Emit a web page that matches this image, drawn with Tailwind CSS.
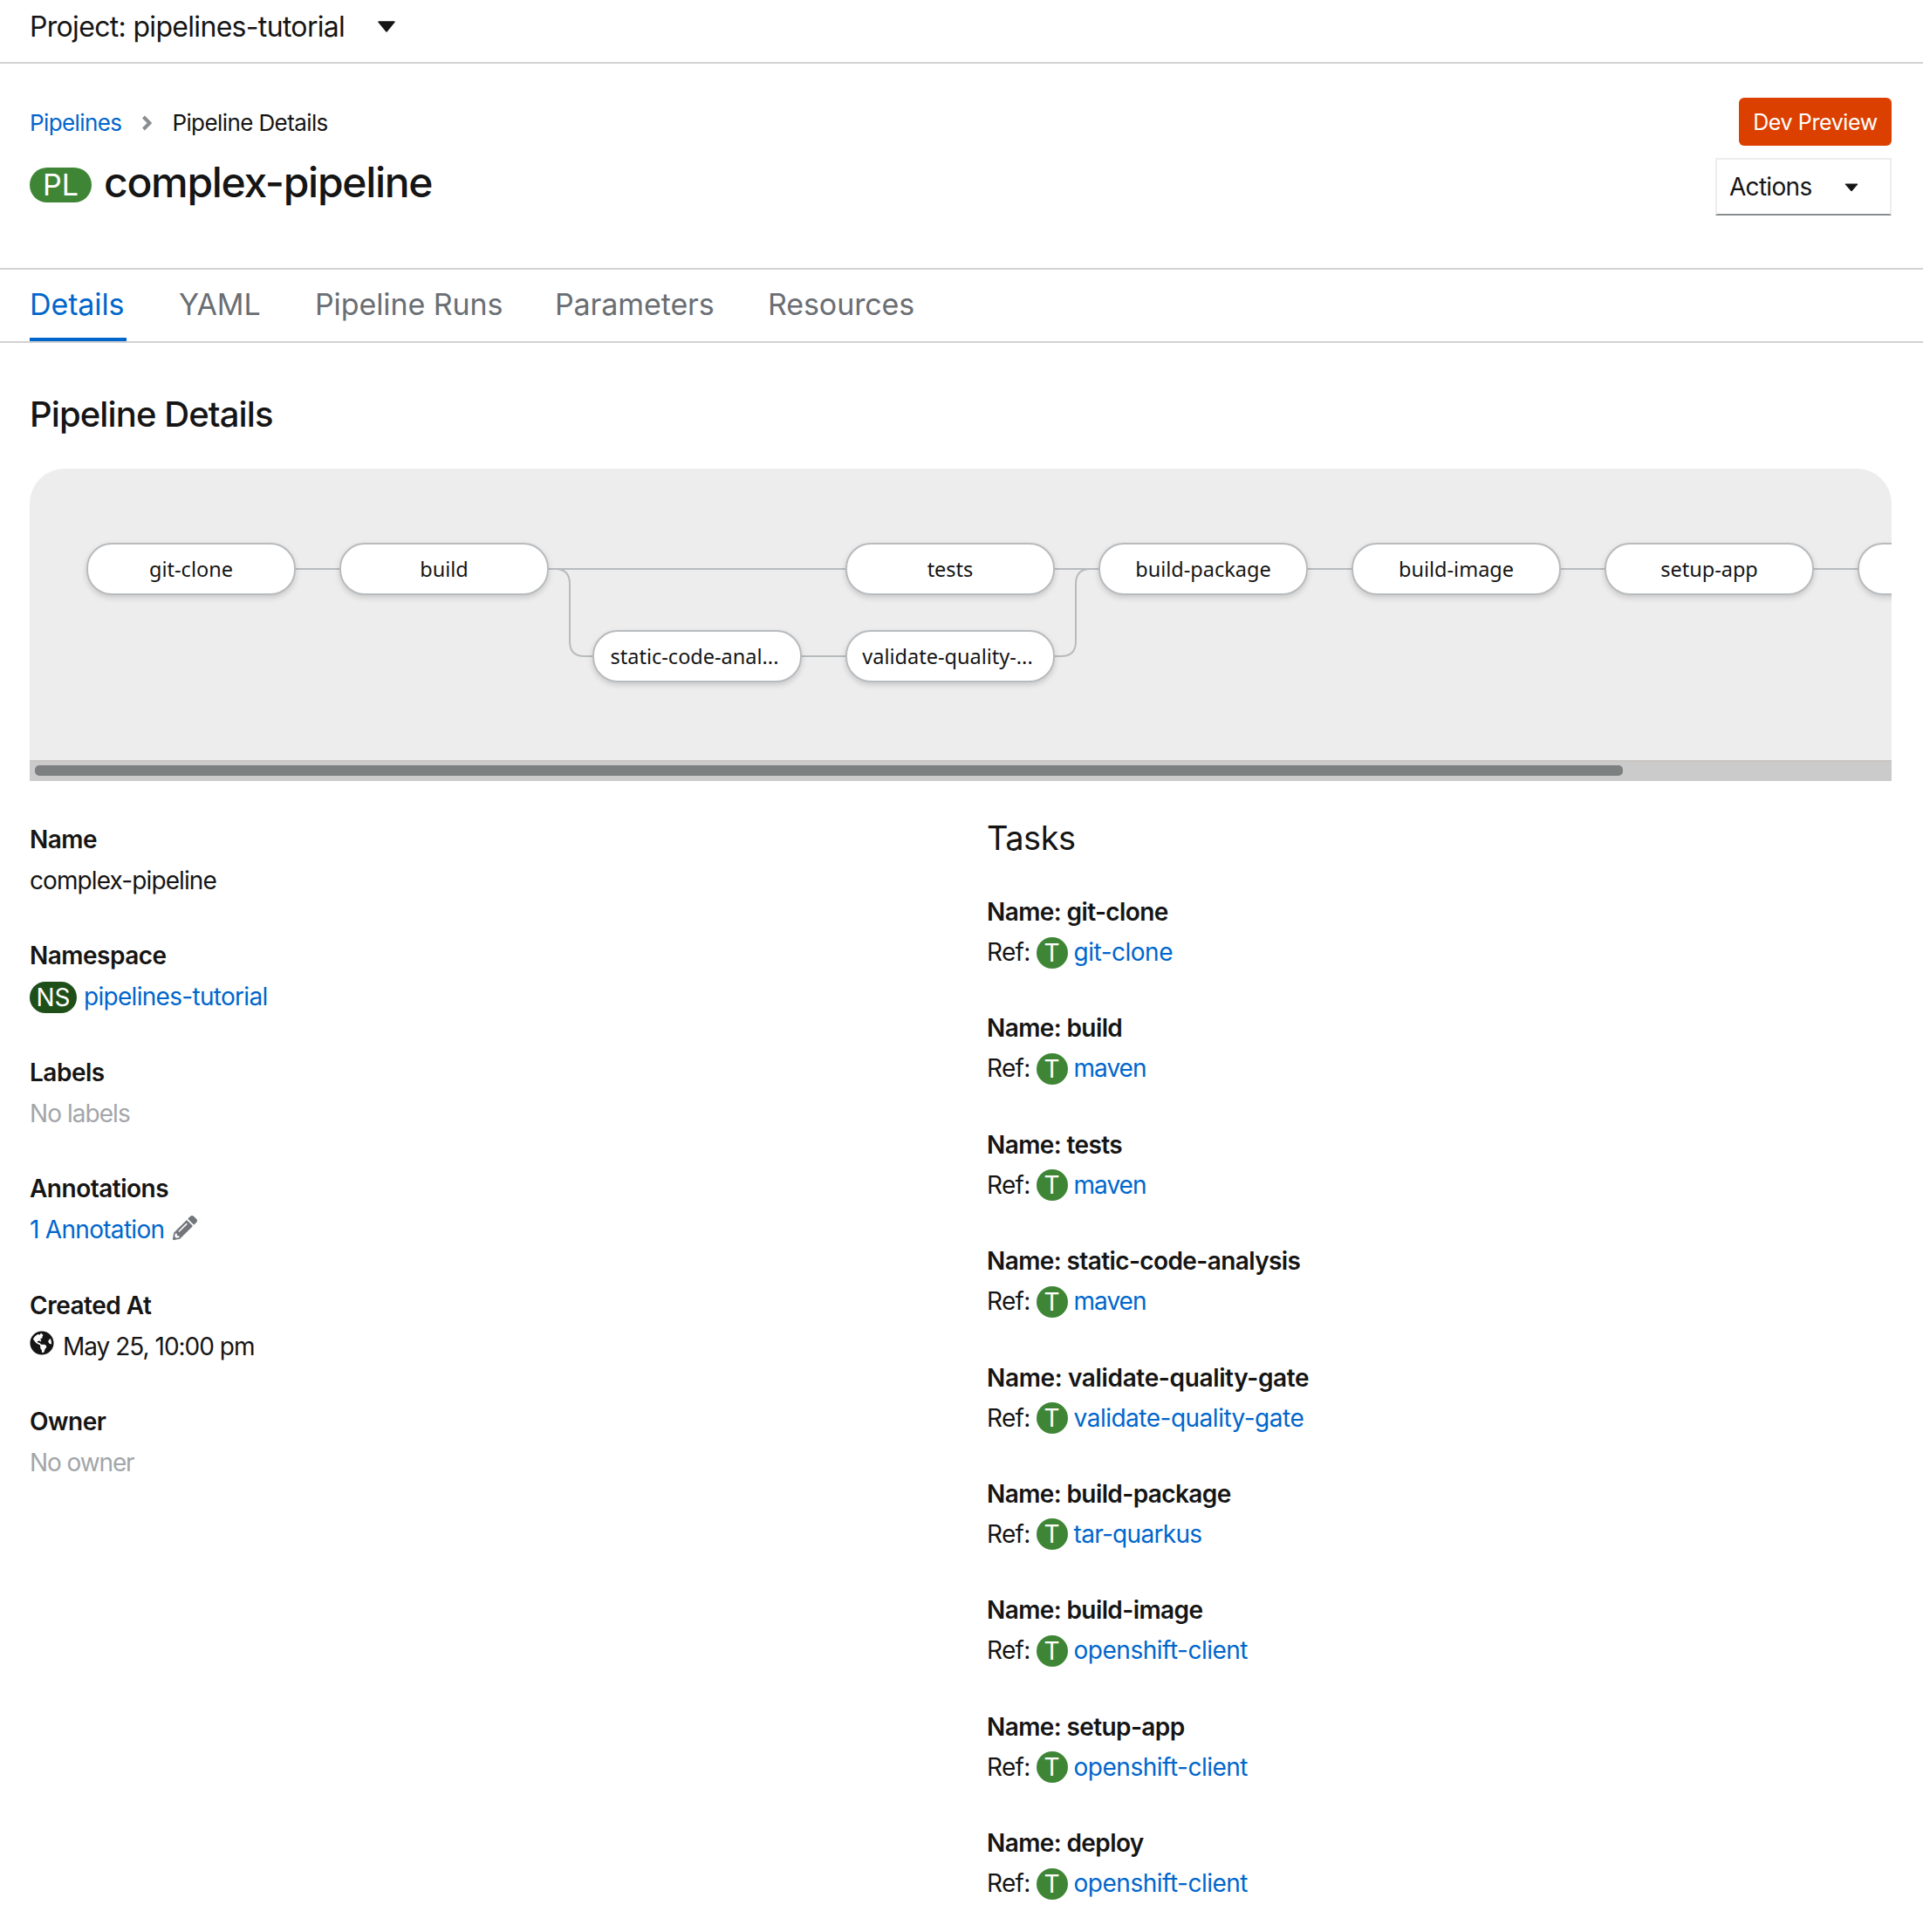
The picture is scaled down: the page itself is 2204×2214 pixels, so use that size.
<!doctype html>
<html lang="en">
<head>
<meta charset="utf-8">
<title>complex-pipeline</title>
<script src="https://cdn.jsdelivr.net/npm/@tailwindcss/browser@4"></script>
</head>
<body class="bg-white text-[#151515] font-['Inter',sans-serif] text-[28px] leading-[47px] tracking-[-0.7px]">

<!-- project bar -->
<div class="h-[73px] border-b-2 border-[#d2d2d2] pl-[34px] pt-[7px]">
  <div class="flex items-center h-[47px] text-[32px] tracking-[-0.68px]">
    <span>Project: pipelines-tutorial</span>
    <svg class="ml-[38px] w-[20px] h-[13px]" viewBox="0 0 20 13"><path d="M1 1h18L10 12z" fill="#151515" stroke="#151515" stroke-width="1.5" stroke-linejoin="round"/></svg>
  </div>
</div>

<!-- page heading -->
<div class="h-[236px] border-b-2 border-[#d2d2d2] pl-[34px] pr-[36px] flex justify-between">
  <div>
    <div class="flex items-center h-[47px] mt-[44px] text-[26px] tracking-[-0.6px]">
      <a class="text-[#06c]">Pipelines</a>
      <svg class="w-[12px] h-[18px] ml-[23px] mr-[23px]" viewBox="0 0 12 18"><path d="M2.5 2l7 7-7 7" fill="none" stroke="#8a8d90" stroke-width="4"/></svg>
      <span>Pipeline Details</span>
    </div>
    <div class="flex items-center mt-[20px] h-[50px]">
      <span class="w-[71px] h-[40px] mt-[5px] rounded-[20px] bg-[#3e8635] text-white text-[34px] tracking-normal leading-[40px] text-center">PL</span>
      <h1 class="ml-[14px] text-[48px] leading-[48px] font-medium tracking-[-1.3px]">complex-pipeline</h1>
    </div>
  </div>
  <div class="flex flex-col items-end">
    <span class="mt-[39px] w-[175px] h-[55px] rounded-[6px] bg-[#dc4000] text-white text-[25px] tracking-[-0.4px] leading-[57px] text-center">Dev Preview</span>
    <div class="mt-[14px] w-[202px] h-[66px] border-2 border-[#ededed] border-b-[#8a8d90] pl-[14px] pt-[1px] flex items-center">
      <span>Actions</span>
      <svg class="ml-[38px] w-[16px] h-[10px]" viewBox="0 0 16 10"><path d="M1 1h14L8 9z" fill="#151515" stroke="#151515" stroke-linejoin="round"/></svg>
    </div>
  </div>
</div>

<!-- tabs -->
<nav class="h-[84px] border-b-2 border-[#d2d2d2] pl-[34px] flex gap-[60px] text-[34px] tracking-[-0.1px] whitespace-nowrap text-[#6a6e73]">
  <a class="w-[111px] h-[82px] leading-[80px] border-b-[4px] border-[#06c] text-[#06c]">Details</a>
  <a class="w-[96px] leading-[80px]">YAML</a>
  <a class="w-[215px] leading-[80px]">Pipeline Runs</a>
  <a class="w-[184px] leading-[80px]">Parameters</a>
  <a class="leading-[80px]">Resources</a>
</nav>

<main class="pl-[34px] pr-[36px]">
  <h2 class="mt-[58px] text-[40px] leading-[48px] font-medium tracking-[-0.9px]">Pipeline Details</h2>

  <!-- pipeline graph -->
  <div class="mt-[38px] h-[358px] rounded-t-[40px] bg-[#ededed] overflow-hidden flex flex-col">
    <svg class="w-[2134px] h-[334px]" viewBox="0 0 2134 334" font-family="'Noto Sans',sans-serif" font-size="23.5" letter-spacing="0" fill="#151515" text-anchor="middle">
      <g fill="none" stroke="#b8bbbe" stroke-width="2">
        <path d="M304 115h52M594 115h342M1174 115h52M1464 115h52M1754 115h52M2044 115h52"/>
        <path d="M594 115h8q17 0 17 17v66q0 17 17 17h10M884 215h52"/>
        <path d="M1174 215h8q17 0 17-17v-66q0-17 17-17h10"/>
      </g>
      <g fill="#fff" stroke="#b8bbbe" stroke-width="2" class="drop-shadow-[0_3px_3px_rgba(0,0,0,0.15)]">
        <rect x="66" y="86" width="238" height="58" rx="28"/>
        <rect x="356" y="86" width="238" height="58" rx="28"/>
        <rect x="646" y="186" width="238" height="58" rx="28"/>
        <rect x="936" y="86" width="238" height="58" rx="28"/>
        <rect x="936" y="186" width="238" height="58" rx="28"/>
        <rect x="1226" y="86" width="238" height="58" rx="28"/>
        <rect x="1516" y="86" width="238" height="58" rx="28"/>
        <rect x="1806" y="86" width="238" height="58" rx="28"/>
        <rect x="2096" y="86" width="238" height="58" rx="28"/>
      </g>
      <text x="185" y="124">git-clone</text>
      <text x="475" y="124">build</text>
      <text x="762" y="224">static-code-anal...</text>
      <text x="1055" y="124">tests</text>
      <text x="1052" y="224">validate-quality-...</text>
      <text x="1345" y="124">build-package</text>
      <text x="1635" y="124">build-image</text>
      <text x="1925" y="124">setup-app</text>
    </svg>
    <div class="h-[24px] bg-[#cbcbcb] border-t-2 border-[#c9c6c3] pt-[4px] pl-[6px]">
      <div class="w-[1820px] h-[12px] rounded-[5px] bg-[#7d8080]"></div>
    </div>
  </div>

  <div class="grid grid-cols-2 gap-[60px] pt-[44px]">
    <!-- resource summary -->
    <dl>
      <dt class="font-semibold tracking-[-0.5px]">Name</dt>
      <dd class="mb-[39.4px] tracking-[-0.9px]">complex-pipeline</dd>
      <dt class="font-semibold tracking-[-0.5px]">Namespace</dt>
      <dd class="mb-[39.4px] flex items-center">
        <span class="w-[54px] h-[36px] rounded-[18px] bg-[#1e4f18] text-white tracking-normal leading-[36px] text-center">NS</span>
        <a class="ml-[8px] text-[#06c]">pipelines-tutorial</a>
      </dd>
      <dt class="font-semibold tracking-[-0.5px]">Labels</dt>
      <dd class="mb-[39.4px] text-[#a2a6aa] tracking-[-0.95px]">No labels</dd>
      <dt class="font-semibold tracking-[-0.5px]">Annotations</dt>
      <dd class="mb-[39.4px] flex items-center">
        <a class="text-[#06c]">1 Annotation</a>
        <svg class="ml-[10px] w-[28px] h-[28px] -mt-[5px]" viewBox="0 0 512 512"><path fill="#72767b" d="M497.9 142.1l-46.1 46.1c-4.7 4.7-12.3 4.7-17 0l-111-111c-4.7-4.7-4.7-12.3 0-17l46.1-46.1c18.7-18.7 49.1-18.7 67.9 0l60.1 60.1c18.8 18.7 18.8 49.1 0 67.9zM284.2 99.8L21.6 362.4.4 483.9c-2.9 16.4 11.4 30.6 27.8 27.8l121.5-21.3 262.6-262.6c4.7-4.7 4.7-12.3 0-17l-111-111c-4.8-4.7-12.4-4.7-17.1 0zM124.1 339.9c-5.5-5.5-5.5-14.3 0-19.8l154-154c5.5-5.5 14.3-5.5 19.8 0s5.5 14.3 0 19.8l-154 154c-5.5 5.5-14.3 5.5-19.8 0zM88 424h48v36.3l-64.5 11.3-31.1-31.1L51.7 376H88v48z"/></svg>
      </dd>
      <dt class="font-semibold tracking-[-0.5px]">Created At</dt>
      <dd class="mb-[39.4px] flex items-center">
        <svg class="w-[28px] h-[28px] -mt-[9px]" viewBox="0 0 496 512"><path fill="#151515" d="M248 8C111.03 8 0 119.03 0 256s111.03 248 248 248 248-111.03 248-248S384.97 8 248 8zm82.29 357.6c-3.9 3.88-7.99 7.95-11.31 11.28-2.99 3-5.1 6.7-6.17 10.71-1.51 5.66-2.73 11.38-4.77 16.87l-17.39 46.85c-13.76 3-28 4.69-42.65 4.69v-27.38c1.69-12.62-7.64-36.26-22.63-51.25-6-6-9.37-14.14-9.37-22.63v-32.01c0-11.64-6.27-22.34-16.46-27.97-14.37-7.95-34.81-19.06-48.81-26.11-11.48-5.78-22.1-13.14-31.65-21.75l-.8-.72a114.792 114.792 0 0 1-18.06-20.74c-9.38-13.77-24.66-36.42-34.59-51.14 20.47-45.5 57.36-82.04 103.2-101.89l24.01 12.01C203.48 89.74 216 82.01 216 70.11v-11.3c7.99-1.29 16.12-2.11 24.39-2.42l28.3 28.3c6.25 6.25 6.25 16.38 0 22.63L264 112l-10.34 10.34c-3.12 3.12-3.12 8.19 0 11.31l4.69 4.69c3.12 3.12 3.12 8.19 0 11.31l-8 8a8.008 8.008 0 0 1-5.66 2.34h-8.99c-2.08 0-4.08.81-5.58 2.27l-9.92 9.65a8.008 8.008 0 0 0-1.58 9.31l15.59 31.19c2.66 5.32-1.21 11.58-7.15 11.58h-5.64c-1.93 0-3.79-.7-5.24-1.96l-9.28-8.06a16.017 16.017 0 0 0-15.55-3.1l-31.17 10.39a11.95 11.95 0 0 0-8.17 11.34c0 4.53 2.56 8.66 6.61 10.69l11.08 5.54c9.41 4.71 19.79 7.16 30.31 7.16s22.59 27.29 32 32h66.75c8.49 0 16.62 3.37 22.63 9.37l13.69 13.69a30.503 30.503 0 0 1 8.93 21.57 46.536 46.536 0 0 1-13.72 32.98zM417 274.25c-5.79-1.45-10.84-5-14.15-9.97l-17.98-26.97a23.97 23.97 0 0 1 0-26.62l19.59-29.38c2.32-3.47 5.5-6.29 9.24-8.15l12.98-6.49C440.2 193.59 448 223.87 448 256c0 8.67-.74 17.16-1.82 25.54L417 274.25z"/></svg>
        <span class="ml-[10px] tracking-[-1px]">May 25, 10:00 pm</span>
      </dd>
      <dt class="font-semibold tracking-[-0.5px]">Owner</dt>
      <dd class="text-[#a2a6aa] tracking-[-1.1px]">No owner</dd>
    </dl>

    <!-- tasks -->
    <div class="-mt-[2px]">
      <h2 class="mb-[38px] text-[38px] leading-[47px] tracking-[-0.5px]">Tasks</h2>
      <dl>
        <dt class="h-[46px] font-semibold tracking-[-0.6px]">Name: git-clone</dt>
        <dd class="mb-[40.4px] flex items-center">Ref:<span class="ml-[7px] w-[36px] h-[36px] rounded-full bg-[#3e8635] text-white tracking-normal leading-[36px] text-center">T</span><a class="ml-[7px] text-[#06c] tracking-[-0.5px]">git-clone</a></dd>
        <dt class="h-[46px] font-semibold tracking-[-0.6px]">Name: build</dt>
        <dd class="mb-[40.4px] flex items-center">Ref:<span class="ml-[7px] w-[36px] h-[36px] rounded-full bg-[#3e8635] text-white tracking-normal leading-[36px] text-center">T</span><a class="ml-[7px] text-[#06c] tracking-[-1px]">maven</a></dd>
        <dt class="h-[46px] font-semibold tracking-[-0.6px]">Name: tests</dt>
        <dd class="mb-[40.4px] flex items-center">Ref:<span class="ml-[7px] w-[36px] h-[36px] rounded-full bg-[#3e8635] text-white tracking-normal leading-[36px] text-center">T</span><a class="ml-[7px] text-[#06c] tracking-[-1px]">maven</a></dd>
        <dt class="h-[46px] font-semibold tracking-[-0.6px]">Name: static-code-analysis</dt>
        <dd class="mb-[40.4px] flex items-center">Ref:<span class="ml-[7px] w-[36px] h-[36px] rounded-full bg-[#3e8635] text-white tracking-normal leading-[36px] text-center">T</span><a class="ml-[7px] text-[#06c] tracking-[-1px]">maven</a></dd>
        <dt class="h-[46px] font-semibold tracking-[-0.35px]">Name: validate-quality-gate</dt>
        <dd class="mb-[40.4px] flex items-center">Ref:<span class="ml-[7px] w-[36px] h-[36px] rounded-full bg-[#3e8635] text-white tracking-normal leading-[36px] text-center">T</span><a class="ml-[7px] text-[#06c] tracking-[-0.5px]">validate-quality-gate</a></dd>
        <dt class="h-[46px] font-semibold tracking-[-0.6px]">Name: build-package</dt>
        <dd class="mb-[40.4px] flex items-center">Ref:<span class="ml-[7px] w-[36px] h-[36px] rounded-full bg-[#3e8635] text-white tracking-normal leading-[36px] text-center">T</span><a class="ml-[7px] text-[#06c]">tar-quarkus</a></dd>
        <dt class="h-[46px] font-semibold tracking-[-0.6px]">Name: build-image</dt>
        <dd class="mb-[40.4px] flex items-center">Ref:<span class="ml-[7px] w-[36px] h-[36px] rounded-full bg-[#3e8635] text-white tracking-normal leading-[36px] text-center">T</span><a class="ml-[7px] text-[#06c] tracking-[-0.5px]">openshift-client</a></dd>
        <dt class="h-[46px] font-semibold tracking-[-0.6px]">Name: setup-app</dt>
        <dd class="mb-[40.4px] flex items-center">Ref:<span class="ml-[7px] w-[36px] h-[36px] rounded-full bg-[#3e8635] text-white tracking-normal leading-[36px] text-center">T</span><a class="ml-[7px] text-[#06c] tracking-[-0.5px]">openshift-client</a></dd>
        <dt class="h-[46px] font-semibold tracking-[-0.6px]">Name: deploy</dt>
        <dd class="flex items-center">Ref:<span class="ml-[7px] w-[36px] h-[36px] rounded-full bg-[#3e8635] text-white tracking-normal leading-[36px] text-center">T</span><a class="ml-[7px] text-[#06c] tracking-[-0.5px]">openshift-client</a></dd>
      </dl>
    </div>
  </div>
</main>
</body>
</html>
